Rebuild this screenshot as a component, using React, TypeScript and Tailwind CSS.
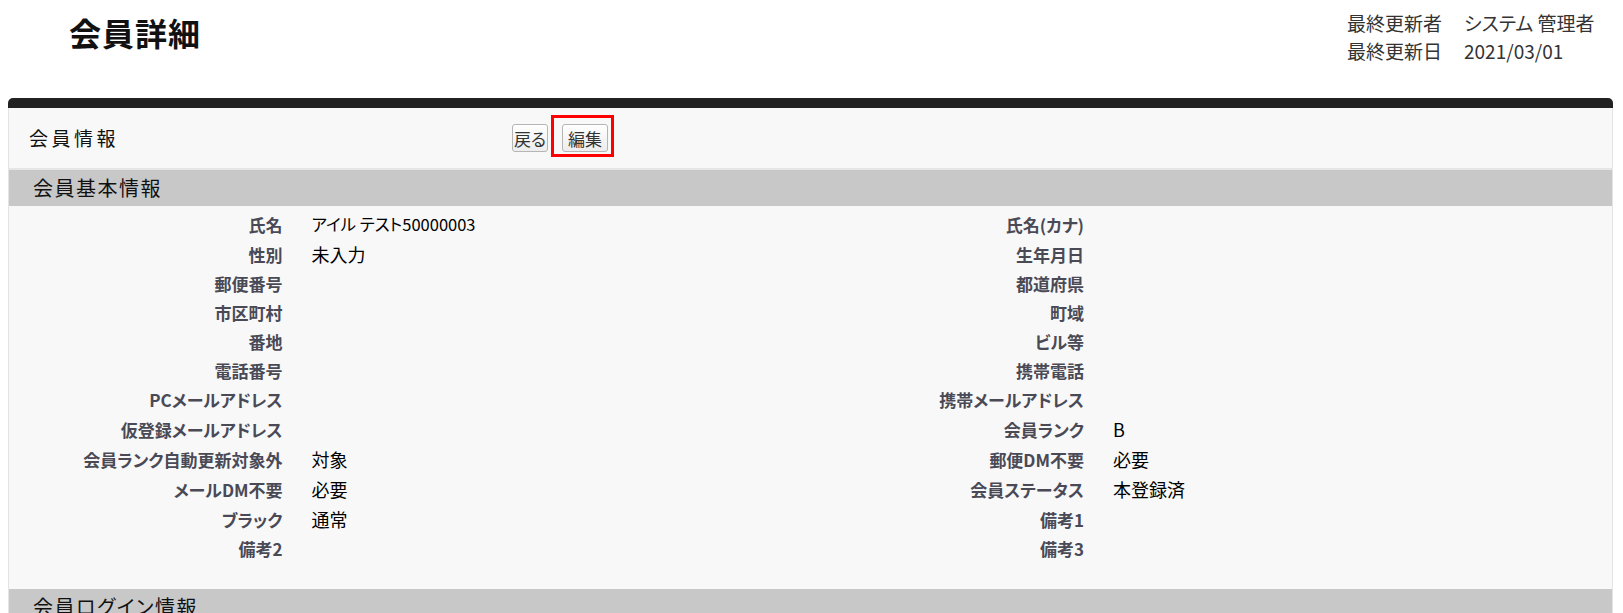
import React from "react";

type Row = {
  l1: string;
  v1?: string;
  v1Small?: boolean;
  l2: string;
  v2?: string;
  h: "h-[29px]" | "h-[30px]";
};

const rows: Row[] = [
  { l1: "氏名", v1: "アイル テスト50000003", v1Small: true, l2: "氏名(カナ)", h: "h-[29px]" },
  { l1: "性別", v1: "未入力", l2: "生年月日", h: "h-[30px]" },
  { l1: "郵便番号", l2: "都道府県", h: "h-[29px]" },
  { l1: "市区町村", l2: "町域", h: "h-[29px]" },
  { l1: "番地", l2: "ビル等", h: "h-[29px]" },
  { l1: "電話番号", l2: "携帯電話", h: "h-[29px]" },
  { l1: "PCメールアドレス", l2: "携帯メールアドレス", h: "h-[29px]" },
  { l1: "仮登録メールアドレス", l2: "会員ランク", v2: "B", h: "h-[30px]" },
  { l1: "会員ランク自動更新対象外", v1: "対象", l2: "郵便DM不要", v2: "必要", h: "h-[30px]" },
  { l1: "メールDM不要", v1: "必要", l2: "会員ステータス", v2: "本登録済", h: "h-[30px]" },
  { l1: "ブラック", v1: "通常", l2: "備考1", h: "h-[30px]" },
  { l1: "備考2", l2: "備考3", h: "h-[29px]" },
];

function Label({ text, h }: { text: string; h: string }) {
  return (
    <div
      className={`${h} flex items-center justify-end pr-[15px] text-[17px] font-bold leading-none text-[#4a4a56] whitespace-nowrap`}
    >
      {text}
    </div>
  );
}

function Value({ text, small, h }: { text?: string; small?: boolean; h: string }) {
  return (
    <div
      className={`${h} flex items-center pl-[14px] leading-none text-black whitespace-nowrap ${
        small ? "text-[16.5px]" : "text-[18px]"
      }`}
    >
      {text ?? ""}
    </div>
  );
}

export default function App() {
  return (
    <div className="w-[1623px] min-h-[700px] bg-white font-['Noto_Sans_CJK_JP','Noto_Sans',sans-serif] [font-feature-settings:'palt']">
      {/* Page header */}
      <header className="flex h-[98px] items-start">
        <h1 className="pl-[69px] pt-[12px] text-[32px] font-bold leading-[40px] tracking-[1px] text-[#111]">
          会員詳細
        </h1>
        <div className="ml-auto w-[276px] pt-[9px] grid grid-cols-[117px_1fr] content-start text-[19px] leading-[28px] text-[#333] whitespace-nowrap">
          <span>最終更新者</span>
          <span>システム 管理者</span>
          <span>最終更新日</span>
          <span>2021/03/01</span>
        </div>
      </header>

      {/* Panel */}
      <div className="ml-[8px] mr-[10px]">
        <div className="h-[10px] rounded-t-[5px] bg-[#222222]" />
        <div className="border-x border-[#e3e3e3] bg-[#f8f8f8]">
          {/* Panel header with buttons */}
          <div className="flex h-[62px] items-center border-b-2 border-[#e6e6e6]">
            <div className="w-[503px] pl-[20px] text-[19px] tracking-[3.5px] text-[#111]">会員情報</div>
            <div className="flex items-center gap-[14px]">
              <button className="h-[28px] w-[36px] rounded-[3px] border border-[#b5b5b5] bg-gradient-to-b from-white to-[#ededed] text-[17px] leading-none text-[#333]">
                戻る
              </button>
              <div className="relative">
                <button className="h-[28px] w-[46px] rounded-[3px] border border-[#b5b5b5] bg-gradient-to-b from-white to-[#ededed] text-[17px] leading-none text-[#333]">
                  編集
                </button>
                <div className="pointer-events-none absolute -left-[11px] -top-[9px] -right-[6px] -bottom-[5px] border-[3px] border-[#ff0000]" />
              </div>
            </div>
          </div>

          {/* Section: 会員基本情報 */}
          <div className="flex h-[36px] items-center bg-[#c8c8c8] pl-[24px] text-[20px] tracking-[1.5px] text-[#111]">
            会員基本情報
          </div>
          <div className="grid grid-cols-[18%_32%_18%_32%] pt-[4px] pb-[26px]">
            {rows.map((r, i) => (
              <React.Fragment key={i}>
                <Label text={r.l1} h={r.h} />
                <Value text={r.v1} small={r.v1Small} h={r.h} />
                <Label text={r.l2} h={r.h} />
                <Value text={r.v2} h={r.h} />
              </React.Fragment>
            ))}
          </div>

          {/* Section: 会員ログイン情報 */}
          <div className="flex h-[36px] items-center bg-[#c8c8c8] pl-[24px] text-[20px] tracking-[1.5px] text-[#111]">
            会員ログイン情報
          </div>
          <div className="h-[80px]" />
        </div>
      </div>
    </div>
  );
}
